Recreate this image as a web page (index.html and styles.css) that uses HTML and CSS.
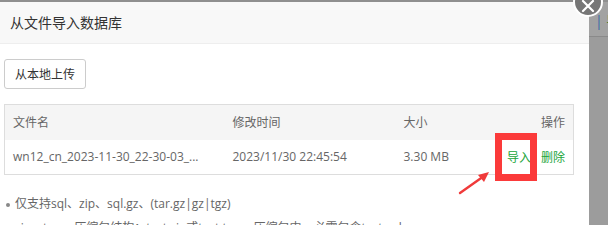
FILE: index.html
```html
<!DOCTYPE html>
<html lang="zh-CN">
<head>
    <meta charset="UTF-8">
    <title>从文件导入数据库</title>
    <link rel="stylesheet" href="styles.css">
</head>
<body>
    <div class="backdrop">
        <div class="side-text"><span class="side-bar">|</span> 导</div>
    </div>

    <div class="layer">
        <div class="layer-title">从文件导入数据库</div>
        <div class="layer-content">
            <button type="button" class="btn-upload">从本地上传</button>

            <table class="file-table">
                <thead>
                    <tr>
                        <th class="col-name">文件名</th>
                        <th class="col-time">修改时间</th>
                        <th class="col-size">大小</th>
                        <th class="col-ops">操作</th>
                    </tr>
                </thead>
                <tbody>
                    <tr>
                        <td>wn12_cn_2023-11-30_22-30-03_...</td>
                        <td>2023/11/30 22:45:54</td>
                        <td>3.30 MB</td>
                        <td class="col-ops">
                            <a class="op op-import">导入</a><a class="op">删除</a>
                        </td>
                    </tr>
                </tbody>
            </table>

            <ul class="tips">
                <li>仅支持sql、zip、sql.gz、(tar.gz|gz|tgz)</li>
                <li>zip、tar.gz压缩包结构：test.zip或test.tar.gz压缩包内，必需包含test.sql</li>
            </ul>
        </div>
        <span class="layer-close">
            <svg width="14" height="14" viewBox="0 0 14 14">
                <path d="M2 2 L12 12 M12 2 L2 12" stroke="#fff" stroke-width="2.2" stroke-linecap="round"/>
            </svg>
        </span>
    </div>

    <!-- 标注：红框 + 箭头 -->
    <div class="mark-box"></div>
    <svg class="mark-arrow" width="40" height="30" viewBox="0 0 40 30">
        <path d="M2 27 L26 10" stroke="#f03a3a" stroke-width="2.4" stroke-linecap="round"/>
        <path d="M31 6 L20 9 L26 16 Z" fill="#f03a3a"/>
    </svg>
</body>
</html>
```

FILE: styles.css
```css
* {
    margin: 0;
    padding: 0;
    box-sizing: border-box;
}

body {
    width: 608px;
    height: 225px;
    overflow: hidden;
    background: #9c9c9c;
    font-family: "Open Sans", "Noto Sans CJK SC", sans-serif;
    color: #666;
    position: relative;
}

.backdrop {
    height: 37px;
    border-top: 2px solid #8f8f8f;
    border-bottom: 1px solid #8a8a8a;
    background: #a2a2a2;
}

.side-text {
    padding: 9px 0 0 595px;
    font-size: 14px;
    line-height: 20px;
    color: #2d7a2d;
    white-space: nowrap;
}

.side-bar {
    color: #3a6aa8;
}

.layer {
    position: absolute;
    left: 0;
    top: 2px;
    width: 589px;
    height: 240px;
    background: #fff;
}

.layer-title {
    height: 42px;
    padding-left: 10px;
    line-height: 42px;
    font-size: 14px;
    color: #333;
    background: #f8f8f8;
    border-bottom: 1px solid #eee;
}

.layer-content {
    padding: 15px 15px 0 4px;
}

.btn-upload {
    height: 30px;
    padding: 0 10px;
    font-family: inherit;
    font-size: 12px;
    color: #333;
    background: #fff;
    border: 1px solid #ccc;
    border-radius: 3px;
}

.file-table {
    width: 570px;
    margin-top: 15px;
    border-collapse: collapse;
    border: 1px solid #ddd;
    font-size: 12px;
}

.file-table th,
.file-table td {
    height: 35px;
    padding: 0 8px;
    text-align: left;
    font-weight: normal;
    white-space: nowrap;
}

.file-table thead tr {
    background: #f5f5f5;
}

.file-table .col-name { width: 220px; }
.file-table .col-time { width: 171px; }

.file-table .col-ops {
    text-align: right;
}

.op {
    color: #20a53a;
    margin-left: 10px;
}

.tips {
    margin-top: 17px;
    padding-left: 11px;
    font-size: 12px;
    line-height: 24px;
    color: #666;
}

.tips li {
    list-style: none;
    position: relative;
}

.tips li::before {
    content: "";
    position: absolute;
    left: -9px;
    top: 11px;
    width: 4px;
    height: 4px;
    border-radius: 50%;
    background: #888;
}

.layer-close {
    position: absolute;
    right: -14px;
    top: -15px;
    width: 30px;
    height: 30px;
    border-radius: 50%;
    background: #767676;
    border: 2px solid #fff;
    display: flex;
    align-items: center;
    justify-content: center;
    padding-top: 7px;
}

.mark-box {
    position: absolute;
    left: 495px;
    top: 133px;
    width: 42px;
    height: 48px;
    border: 7px solid #fb3a3a;
}

.mark-arrow {
    position: absolute;
    left: 458px;
    top: 166px;
}
```
